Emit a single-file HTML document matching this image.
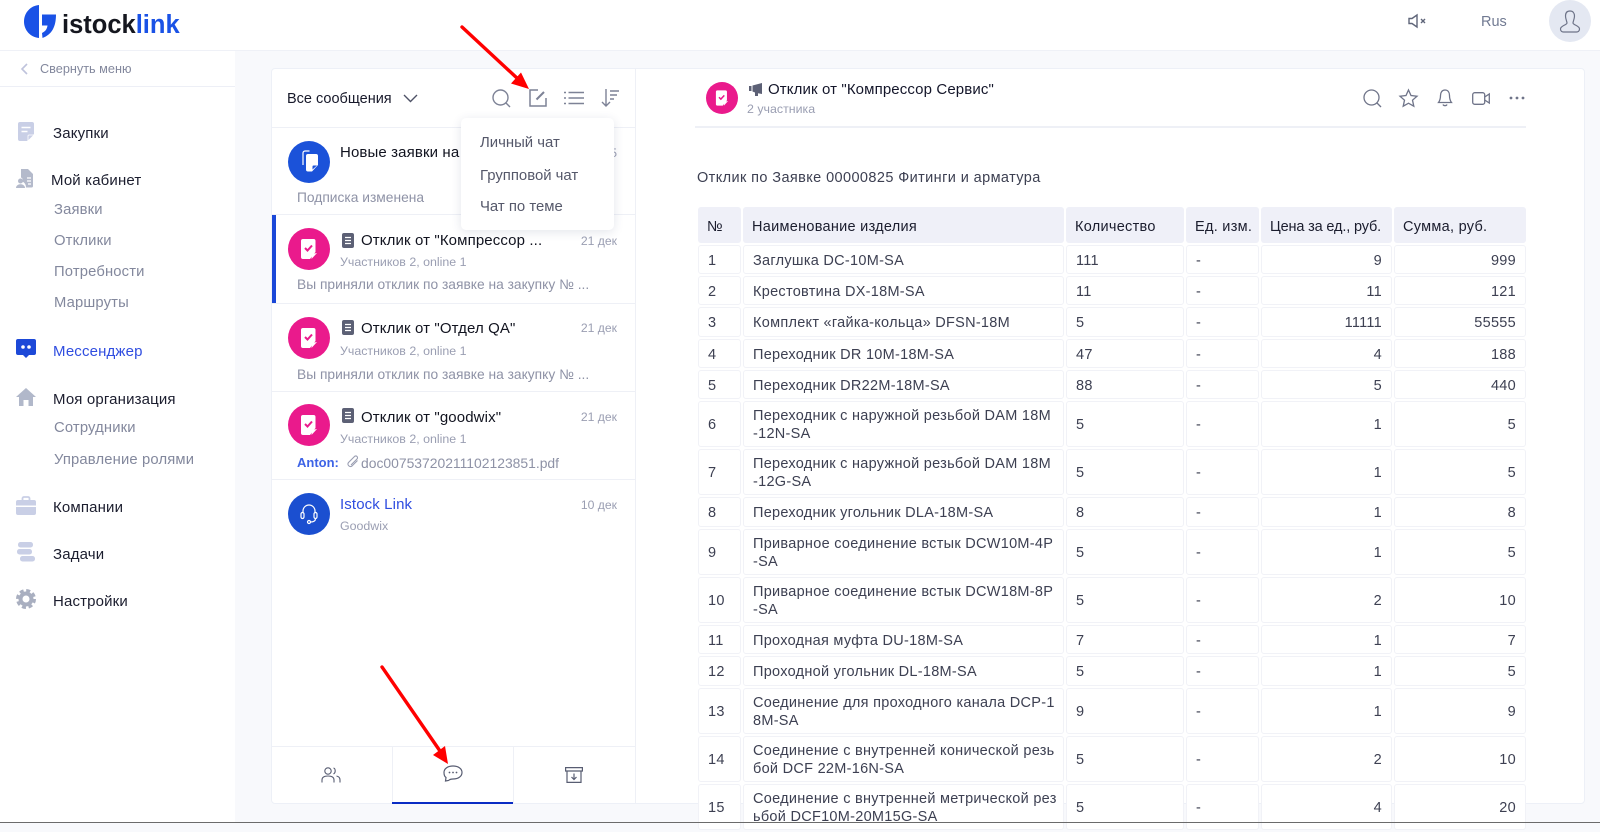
<!DOCTYPE html>
<html lang="ru">
<head>
<meta charset="utf-8">
<title>Istock Link</title>
<style>
html,body{margin:0;padding:0;width:1600px;height:823px;overflow:hidden;background:#f8f9fc;font-family:"Liberation Sans","Noto Sans CJK SC",sans-serif;color:#1b1d2e}
*{box-sizing:border-box}
.abs{position:absolute}
.t{position:absolute;white-space:nowrap;line-height:20px;font-size:14px}
.hdr{left:0;top:0;width:1600px;height:51px;background:#fff;border-bottom:1px solid #eff1f7}
.side{left:0;top:51px;width:235px;height:772px;background:#fff}
.nav{font-size:15px;letter-spacing:.15px;color:#1b1d2e}
.sub{font-size:14.800px;letter-spacing:.15px;color:#83889d}
.panel{left:271px;top:68px;width:1314px;height:736px;background:#fff;border:1px solid #edf0f7;border-radius:4px}
.hl{position:absolute;height:1px;background:#eef0f6}
.vl{position:absolute;width:1px;background:#eef0f6}
.name{font-size:15px;letter-spacing:.12px;color:#11131f}
.meta{font-size:12.400px;color:#9a9eb2}
.prev{font-size:13.800px;color:#8e92a6}
.date{font-size:12.200px;color:#9a9eb2;text-align:right;width:60px;left:557px}
.menu{left:461px;top:118px;width:153px;height:112px;background:#fff;border-radius:5px;box-shadow:0 2px 10px rgba(60,70,110,.14)}
.menu div{position:absolute;left:19px;line-height:20px;font-size:14.900px;color:#55586a;white-space:nowrap}
table{position:absolute;left:696px;top:205px;border-collapse:separate;border-spacing:2px;table-layout:fixed;width:832px;font-size:14.500px;letter-spacing:.28px;color:#3d4052}
th,td{padding:2px 9px 0;border-radius:3px;line-height:18px;font-weight:normal;text-align:left;overflow:visible;white-space:nowrap}
th{background:#eff0f8;color:#1b1d2e;height:36px;padding-top:3px}
td{background:#fff;border:1px solid #f1f2f7;height:29px}
tr.d td{height:46px}
tr.e td{height:30px}
td.n{text-align:right}
.bot{left:0;top:822px;width:1600px;height:1px;background:#6b6b6b}
svg{position:absolute;overflow:visible}
</style>
</head>
<body>
<svg width="0" height="0" style="position:absolute">
<defs>
<symbol id="pink" viewBox="0 0 42 42">
<circle cx="21" cy="21" r="21" fill="#ea1a8c"/>
<path d="M15 11h10.500a2 2 0 0 1 2 2v11l-5.500 7h-7a2 2 0 0 1-2-2V13a2 2 0 0 1 2-2z" fill="#fff"/>
<path d="M17 20l2.500 2.500 4.500-5" fill="none" stroke="#ea1a8c" stroke-width="2"/>
<path d="M23.500 31l5.500-6-5 1z" fill="#fff"/>
</symbol>
<symbol id="doc" viewBox="0 0 12 15">
<rect width="12" height="15" rx="2" fill="#5c6075"/>
<path d="M3 4.500h6M3 7.500h6M3 10.500h6" stroke="#fff" stroke-width="1.200"/>
</symbol>
</defs>
</svg>

<div class="abs hdr"></div>
<!-- logo -->
<svg style="left:24px;top:5px" width="33" height="34" viewBox="0 0 33 34">
<path d="M15 0C6 1 0 8 0 16.500S6 32 15 33z" fill="#1a52e6"/>
<path d="M18 9.500h14c0 12-4 20-13.500 23.500l-.5-5c3-1.500 5-3.500 5.500-7.500H18z" fill="#1a52e6"/>
</svg>
<div class="t" style="left:62px;top:12px;font-size:25.500px;line-height:26px;font-weight:bold;color:#15171f">istock<span style="color:#1a52e6">link</span></div>

<svg style="left:1408px;top:13px" width="20" height="16" viewBox="0 0 20 16" fill="none" stroke="#5f6579" stroke-width="1.400">
<path d="M1 5.500h3L9 2v12l-5-3.500H1z"/><path d="M13 6l4 4M17 6l-4 4"/>
</svg>
<div class="t" style="left:1481px;top:12px;font-size:14.500px;color:#717a92">Rus</div>
<div class="abs" style="left:1549px;top:0;width:42px;height:42px;border-radius:50%;background:#e4e8f2"></div>
<svg style="left:1559px;top:10px" width="22" height="24" viewBox="0 0 22 24" fill="none" stroke="#6d7388" stroke-width="1.200">
<path d="M11 1c3 0 4.500 2.200 4.500 5S14 11.500 14 13c0 2 6.500 2.500 6.500 6 0 2-1.500 3-3 3h-13c-1.500 0-3-1-3-3 0-3.500 6.500-4 6.500-6 0-1.500-1.500-4-1.500-7S8 1 11 1z"/>
</svg>

<!-- Sidebar -->
<div class="abs side"></div>
<div class="hl" style="left:0;top:86px;width:235px;background:#edeff6"></div>
<svg style="left:20px;top:63px" width="9" height="12" viewBox="0 0 9 12" fill="none" stroke="#bfc3dc" stroke-width="1.600"><path d="M7 1L2 6l5 5"/></svg>
<div class="t" style="left:40px;top:59px;font-size:12.700px;color:#83889d">Свернуть меню</div>

<svg style="left:18px;top:122px" width="16" height="19" viewBox="0 0 16 19">
<path d="M2 0h12a2 2 0 0 1 2 2v10l-7 7H2a2 2 0 0 1-2-2V2a2 2 0 0 1 2-2z" fill="#c9cfe6"/>
<path d="M3.500 5.500h9M3.500 9.500h6" stroke="#fff" stroke-width="1.600"/>
<path d="M10 19v-5a1 1 0 0 1 1-1h5z" fill="#c9cfe6" stroke="#fff" stroke-width=".8"/>
</svg>
<div class="t nav" style="left:53px;top:124px">Закупки</div>

<svg style="left:16px;top:169px" width="18" height="19" viewBox="0 0 18 19">
<path d="M5 0h7l5 5v12a1.500 1.500 0 0 1-1.500 1.500H10C10 15 8 13 6 12.500c1-1.500 1-3-1-4z" fill="#b4bacb"/>
<path d="M11 9h4M11 12h4M12 15h3" stroke="#fff" stroke-width="1.200"/>
<circle cx="4.500" cy="12" r="2.500" fill="#b4bacb"/>
<path d="M0 19c0-5 9-5 9 0z" fill="#b4bacb"/>
</svg>
<div class="t nav" style="left:51px;top:171px">Мой кабинет</div>
<div class="t sub" style="left:54px;top:200px">Заявки</div>
<div class="t sub" style="left:54px;top:231px">Отклики</div>
<div class="t sub" style="left:54px;top:262px">Потребности</div>
<div class="t sub" style="left:54px;top:293px">Маршруты</div>

<svg style="left:16px;top:339px" width="20" height="19" viewBox="0 0 20 19">
<path d="M2 0h16a2 2 0 0 1 2 2v12a2 2 0 0 1-2 2h-5l-3 3-3-3H2a2 2 0 0 1-2-2V2a2 2 0 0 1 2-2z" fill="#1d49d8"/>
<circle cx="7" cy="8" r="1.800" fill="#fff"/><circle cx="13" cy="8" r="1.800" fill="#fff"/>
</svg>
<div class="t nav" style="left:53px;top:342px;color:#2f4de0">Мессенджер</div>

<svg style="left:16px;top:388px" width="20" height="18" viewBox="0 0 20 18">
<path d="M10 0l10 9h-3v9h-4.500v-6h-5v6H3V9H0z" fill="#b1b8ca"/>
</svg>
<div class="t nav" style="left:53px;top:390px">Моя организация</div>
<div class="t sub" style="left:54px;top:418px">Сотрудники</div>
<div class="t sub" style="left:54px;top:450px">Управление ролями</div>

<svg style="left:16px;top:496px" width="20" height="19" viewBox="0 0 20 19">
<path d="M6.500 4V2.500A1.500 1.500 0 0 1 8 1h4a1.500 1.500 0 0 1 1.500 1.500V4" fill="none" stroke="#c9cfe6" stroke-width="1.800"/>
<path d="M2 4h16a2 2 0 0 1 2 2v3.500H0V6a2 2 0 0 1 2-2z" fill="#c9cfe6"/>
<path d="M0 11h20v6a2 2 0 0 1-2 2H2a2 2 0 0 1-2-2z" fill="#c9cfe6"/>
</svg>
<div class="t nav" style="left:53px;top:498px">Компании</div>

<svg style="left:17px;top:542px" width="19" height="20" viewBox="0 0 19 20" fill="#c9cfe6">
<rect x="1" y="0" width="15" height="5.500" rx="2.500"/><rect x="0" y="7" width="15" height="5.500" rx="2.500"/><rect x="3" y="14" width="15" height="5.500" rx="2.500"/>
</svg>
<div class="t nav" style="left:53px;top:545px">Задачи</div>

<svg style="left:16px;top:589px" width="20" height="20" viewBox="0 0 20 20" fill="none" stroke="#a9afc0">
<circle cx="10" cy="10" r="5.500" stroke-width="4"/>
<circle cx="10" cy="10" r="8.500" stroke-width="3" stroke-dasharray="4 2.670"/>
</svg>
<div class="t nav" style="left:53px;top:592px">Настройки</div>

<!-- Panel -->
<div class="abs panel"></div>
<div class="vl" style="left:635px;top:69px;height:734px"></div>
<div class="t" style="left:287px;top:89px;font-size:14.500px;color:#17192a">Все сообщения</div>
<svg style="left:403px;top:94px" width="15" height="9" viewBox="0 0 15 9" fill="none" stroke="#4e5266" stroke-width="1.400"><path d="M1 1l6.500 6.500L14 1"/></svg>

<svg style="left:492px;top:89px" width="19" height="19" viewBox="0 0 19 19" fill="none" stroke="#7d8296" stroke-width="1.400"><circle cx="8.500" cy="8.500" r="7.500"/><path d="M14 14l4 4"/></svg>
<svg style="left:529px;top:89px" width="18" height="18" viewBox="0 0 18 18" fill="none" stroke="#7d8296" stroke-width="1.500"><path d="M9 1H1v16h16V9"/><path d="M7.500 10.500L15 3" stroke-width="2"/></svg>
<svg style="left:564px;top:91px" width="20" height="14" viewBox="0 0 20 14" fill="none" stroke="#7d8296" stroke-width="1.400"><path d="M4.500 1.500H20M4.500 7H20M4.500 12.500H20M0 1.500h2M0 7h2M0 12.500h2"/></svg>
<svg style="left:601px;top:89px" width="18" height="18" viewBox="0 0 18 18" fill="none" stroke="#7d8296" stroke-width="1.400"><path d="M5 0v17M1 13l4 4 4-4M9 2h9M9 6h7M9 10h4"/></svg>

<div class="hl" style="left:272px;top:127px;width:363px"></div>

<!-- item 1 -->
<div class="abs" style="left:288px;top:141px;width:42px;height:42px;border-radius:50%;background:#1b52d9"></div>
<svg style="left:302px;top:150px" width="17" height="23" viewBox="0 0 17 23">
<path d="M7.500 1H3A2 2 0 0 0 1 3v12" fill="none" stroke="#fff" stroke-width="1.200"/>
<path d="M6 4h8a2 2 0 0 1 2 2v9l-6 6.500H6a2 2 0 0 1-2-2V6a2 2 0 0 1 2-2z" fill="#fff"/>
<path d="M10.500 19.500v-3a1 1 0 0 1 1-1h3.500z" fill="#1b52d9"/>
</svg>
<div class="t name" style="left:340px;top:143px">Новые заявки на закупку</div>
<div class="t date" style="top:143px">5</div>
<div class="t prev" style="left:297px;top:188px">Подписка изменена</div>
<div class="hl" style="left:272px;top:214px;width:363px"></div>

<!-- item 2 -->
<div class="abs" style="left:272px;top:215px;width:4px;height:88px;background:#1a47d8"></div>
<svg style="left:288px;top:228px" width="42" height="42"><use href="#pink"/></svg>
<svg style="left:342px;top:233px" width="12" height="15"><use href="#doc"/></svg>
<div class="t name" style="left:361px;top:231px">Отклик от "Компрессор ...</div>
<div class="t date" style="top:231px">21 дек</div>
<div class="t meta" style="left:340px;top:252px">Участников 2, online 1</div>
<div class="t prev" style="left:297px;top:275px">Вы приняли отклик по заявке на закупку № ...</div>
<div class="hl" style="left:272px;top:303px;width:363px"></div>

<!-- item 3 -->
<svg style="left:288px;top:317px" width="42" height="42"><use href="#pink"/></svg>
<svg style="left:342px;top:320px" width="12" height="15"><use href="#doc"/></svg>
<div class="t name" style="left:361px;top:319px">Отклик от "Отдел QA"</div>
<div class="t date" style="top:318px">21 дек</div>
<div class="t meta" style="left:340px;top:341px">Участников 2, online 1</div>
<div class="t prev" style="left:297px;top:365px">Вы приняли отклик по заявке на закупку № ...</div>
<div class="hl" style="left:272px;top:391px;width:363px"></div>

<!-- item 4 -->
<svg style="left:288px;top:404px" width="42" height="42"><use href="#pink"/></svg>
<svg style="left:342px;top:408px" width="12" height="15"><use href="#doc"/></svg>
<div class="t name" style="left:361px;top:408px">Отклик от "goodwix"</div>
<div class="t date" style="top:407px">21 дек</div>
<div class="t meta" style="left:340px;top:429px">Участников 2, online 1</div>
<div class="t prev" style="left:297px;top:453px;font-size:13px"><b style="color:#3d63e6">Anton:</b></div>
<svg style="left:346px;top:455px" width="13" height="14" viewBox="0 0 13 14" fill="none" stroke="#9a9eb2" stroke-width="1.100"><path d="M11.500 5.500L6 11a2.500 2.500 0 0 1-3.500-3.500L8.500 1.500a1.700 1.700 0 0 1 2.500 2.500L5 10"/></svg>
<div class="t prev" style="left:361px;top:453px;font-size:13.900px">doc00753720211102123851.pdf</div>
<div class="hl" style="left:272px;top:479px;width:363px"></div>

<!-- item 5 -->
<div class="abs" style="left:288px;top:493px;width:42px;height:42px;border-radius:50%;background:#1b4fd0"></div>
<svg style="left:300px;top:503px" width="18" height="22" viewBox="0 0 18 22" fill="none" stroke="#fff" stroke-width="1.200">
<path d="M3 10V8a6 6 0 0 1 12 0v2"/><rect x="1" y="9.500" width="3" height="6" rx="1.500"/><rect x="14" y="9.500" width="3" height="6" rx="1.500"/><path d="M15.500 15.500c0 3-2.500 3.500-5 3.500"/><circle cx="9" cy="19" r="1.500"/>
</svg>
<div class="t name" style="left:340px;top:495px;color:#2f4de0">Istock Link</div>
<div class="t date" style="top:495px">10 дек</div>
<div class="t meta" style="left:340px;top:516px">Goodwix</div>

<!-- tabs -->
<div class="hl" style="left:272px;top:746px;width:363px"></div>
<div class="vl" style="left:392px;top:746px;height:58px"></div>
<div class="vl" style="left:513px;top:746px;height:58px"></div>
<div class="abs" style="left:392px;top:802px;width:121px;height:2px;background:#0a2cc4"></div>
<svg style="left:321px;top:767px" width="20" height="16" viewBox="0 0 20 16" fill="none" stroke="#585d72" stroke-width="1.100">
<circle cx="7" cy="4" r="3.200"/><path d="M1 15.500V13c0-3 2.500-4 6-4s6 1 6 4v2.500"/><path d="M12.500 1c2 .5 2.500 4.500 0 6M15.500 9c2.500 .5 3.500 2 3.500 4v2.500"/>
</svg>
<svg style="left:443px;top:765px" width="20" height="17" viewBox="0 0 20 17" fill="none" stroke="#585d72" stroke-width="1.200">
<path d="M10 1c5 0 9 2.500 9 6.500S15 14 10 14c-1.500 0-3 0-4.500 1.500L2.500 16l.5-3.500C1.500 11.500 1 9.500 1 7.500 1 3.500 5 1 10 1z"/>
<circle cx="6.500" cy="7.500" r=".9" fill="#585d72" stroke="none"/><circle cx="10" cy="7.500" r=".9" fill="#585d72" stroke="none"/><circle cx="13.500" cy="7.500" r=".9" fill="#585d72" stroke="none"/>
</svg>
<svg style="left:565px;top:767px" width="18" height="16" viewBox="0 0 18 16" fill="none" stroke="#585d72" stroke-width="1.200">
<path d="M.6.600h16.800v3.400H.6zM2 4v11.400h14V4M9 6.500v6M6.500 10L9 12.500 11.500 10"/>
</svg>

<!-- dropdown -->
<div class="abs menu">
<div style="top:15px">Личный чат</div>
<div style="top:48px">Групповой чат</div>
<div style="top:79px">Чат по теме</div>
</div>

<!-- chat header -->
<svg style="left:706px;top:82px" width="32" height="32"><use href="#pink"/></svg>
<svg style="left:749px;top:83px" width="13" height="13" viewBox="0 0 13 13" fill="#5c6075">
<path d="M0 3h2.500v5H0zM3.500 2.500L13 0v11l-4-.8V13H6V9.500L3.500 8.500z"/>
</svg>
<div class="t" style="left:768px;top:80px;font-size:15px;letter-spacing:.12px;color:#14162a">Отклик от "Компрессор Сервис"</div>
<div class="t meta" style="left:747px;top:99px">2 участника</div>
<div class="hl" style="left:695px;top:126px;width:831px;height:2px;background:#eef0f6"></div>

<svg style="left:1363px;top:89px" width="19" height="19" viewBox="0 0 19 19" fill="none" stroke="#6f7489" stroke-width="1.300"><circle cx="8.500" cy="8.500" r="7.500"/><path d="M14 14l4 4"/></svg>
<svg style="left:1399px;top:89px" width="19" height="18" viewBox="0 0 19 18" fill="none" stroke="#6f7489" stroke-width="1.300"><path d="M9.500 1l2.500 5.500 6 .7-4.500 4 1.300 6-5.300-3-5.300 3 1.300-6L1 7.200l6-.7z"/></svg>
<svg style="left:1438px;top:89px" width="14" height="18" viewBox="0 0 14 18" fill="none" stroke="#6f7489" stroke-width="1.300"><path d="M7 1c3 0 4.500 2.500 4.500 5.500 0 3 .5 5 2 7H.5c1.500-2 2-4 2-7C2.500 3.500 4 1 7 1zM5 15.500c.5 1.500 3.500 1.500 4 0"/></svg>
<svg style="left:1472px;top:92px" width="18" height="13" viewBox="0 0 18 13" fill="none" stroke="#6f7489" stroke-width="1.300"><rect x=".7" y=".7" width="12" height="11.600" rx="2"/><path d="M12.700 5l4.600-3v9l-4.600-3"/></svg>
<svg style="left:1509px;top:96px" width="16" height="4" viewBox="0 0 16 4" fill="#6f7489"><circle cx="2" cy="2" r="1.400"/><circle cx="8" cy="2" r="1.400"/><circle cx="14" cy="2" r="1.400"/></svg>

<div class="t" style="left:697px;top:168px;font-size:14.500px;letter-spacing:.4px;color:#3d4052">Отклик по Заявке 00000825 Фитинги и арматура</div>

<table>
<colgroup><col style="width:43px"><col style="width:321px"><col style="width:118px"><col style="width:73px"><col style="width:131px"><col style="width:132px"></colgroup>
<thead><tr><th>№</th><th>Наименование изделия</th><th>Количество</th><th>Ед. изм.</th><th style="letter-spacing:-.15px">Цена за ед., руб.</th><th>Сумма, руб.</th></tr></thead>
<tbody>
<tr><td>1</td><td>Заглушка DC-10M-SA</td><td>111</td><td>-</td><td class="n">9</td><td class="n">999</td></tr>
<tr><td>2</td><td>Крестовтина DX-18M-SA</td><td>11</td><td>-</td><td class="n">11</td><td class="n">121</td></tr>
<tr class="e"><td>3</td><td>Комплект «гайка-кольца» DFSN-18M</td><td>5</td><td>-</td><td class="n">11111</td><td class="n">55555</td></tr>
<tr><td>4</td><td>Переходник DR 10M-18M-SA</td><td>47</td><td>-</td><td class="n">4</td><td class="n">188</td></tr>
<tr><td>5</td><td>Переходник DR22M-18M-SA</td><td>88</td><td>-</td><td class="n">5</td><td class="n">440</td></tr>
<tr class="d"><td>6</td><td>Переходник с наружной резьбой DAM 18M<br>-12N-SA</td><td>5</td><td>-</td><td class="n">1</td><td class="n">5</td></tr>
<tr class="d"><td>7</td><td>Переходник с наружной резьбой DAM 18M<br>-12G-SA</td><td>5</td><td>-</td><td class="n">1</td><td class="n">5</td></tr>
<tr class="e"><td>8</td><td>Переходник угольник DLA-18M-SA</td><td>8</td><td>-</td><td class="n">1</td><td class="n">8</td></tr>
<tr class="d"><td>9</td><td>Приварное соединение встык DCW10M-4P<br>-SA</td><td>5</td><td>-</td><td class="n">1</td><td class="n">5</td></tr>
<tr class="d"><td>10</td><td>Приварное соединение встык DCW18M-8P<br>-SA</td><td>5</td><td>-</td><td class="n">2</td><td class="n">10</td></tr>
<tr><td>11</td><td>Проходная муфта DU-18M-SA</td><td>7</td><td>-</td><td class="n">1</td><td class="n">7</td></tr>
<tr class="e"><td>12</td><td>Проходной угольник DL-18M-SA</td><td>5</td><td>-</td><td class="n">1</td><td class="n">5</td></tr>
<tr class="d"><td>13</td><td>Соединение для проходного канала DCP-1<br>8M-SA</td><td>9</td><td>-</td><td class="n">1</td><td class="n">9</td></tr>
<tr class="d"><td>14</td><td>Соединение с внутренней конической резь<br>бой DCF 22M-16N-SA</td><td>5</td><td>-</td><td class="n">2</td><td class="n">10</td></tr>
<tr class="d"><td>15</td><td>Соединение с внутренней метрической рез<br>ьбой DCF10M-20M15G-SA</td><td>5</td><td>-</td><td class="n">4</td><td class="n">20</td></tr>
</tbody>
</table>

<!-- red arrows -->
<svg style="left:0;top:0" width="1600" height="823" viewBox="0 0 1600 823">
<path d="M462 27L518 79" stroke="#f00" stroke-width="3.400" stroke-linecap="round" fill="none"/>
<path d="M529 89L511 83.500 521 72.500z" fill="#f00"/>
<path d="M382 667L440 751" stroke="#f00" stroke-width="3.400" stroke-linecap="round" fill="none"/>
<path d="M448 764L433 755 445 746z" fill="#f00"/>
</svg>

<div class="abs bot"></div>
</body>
</html>
